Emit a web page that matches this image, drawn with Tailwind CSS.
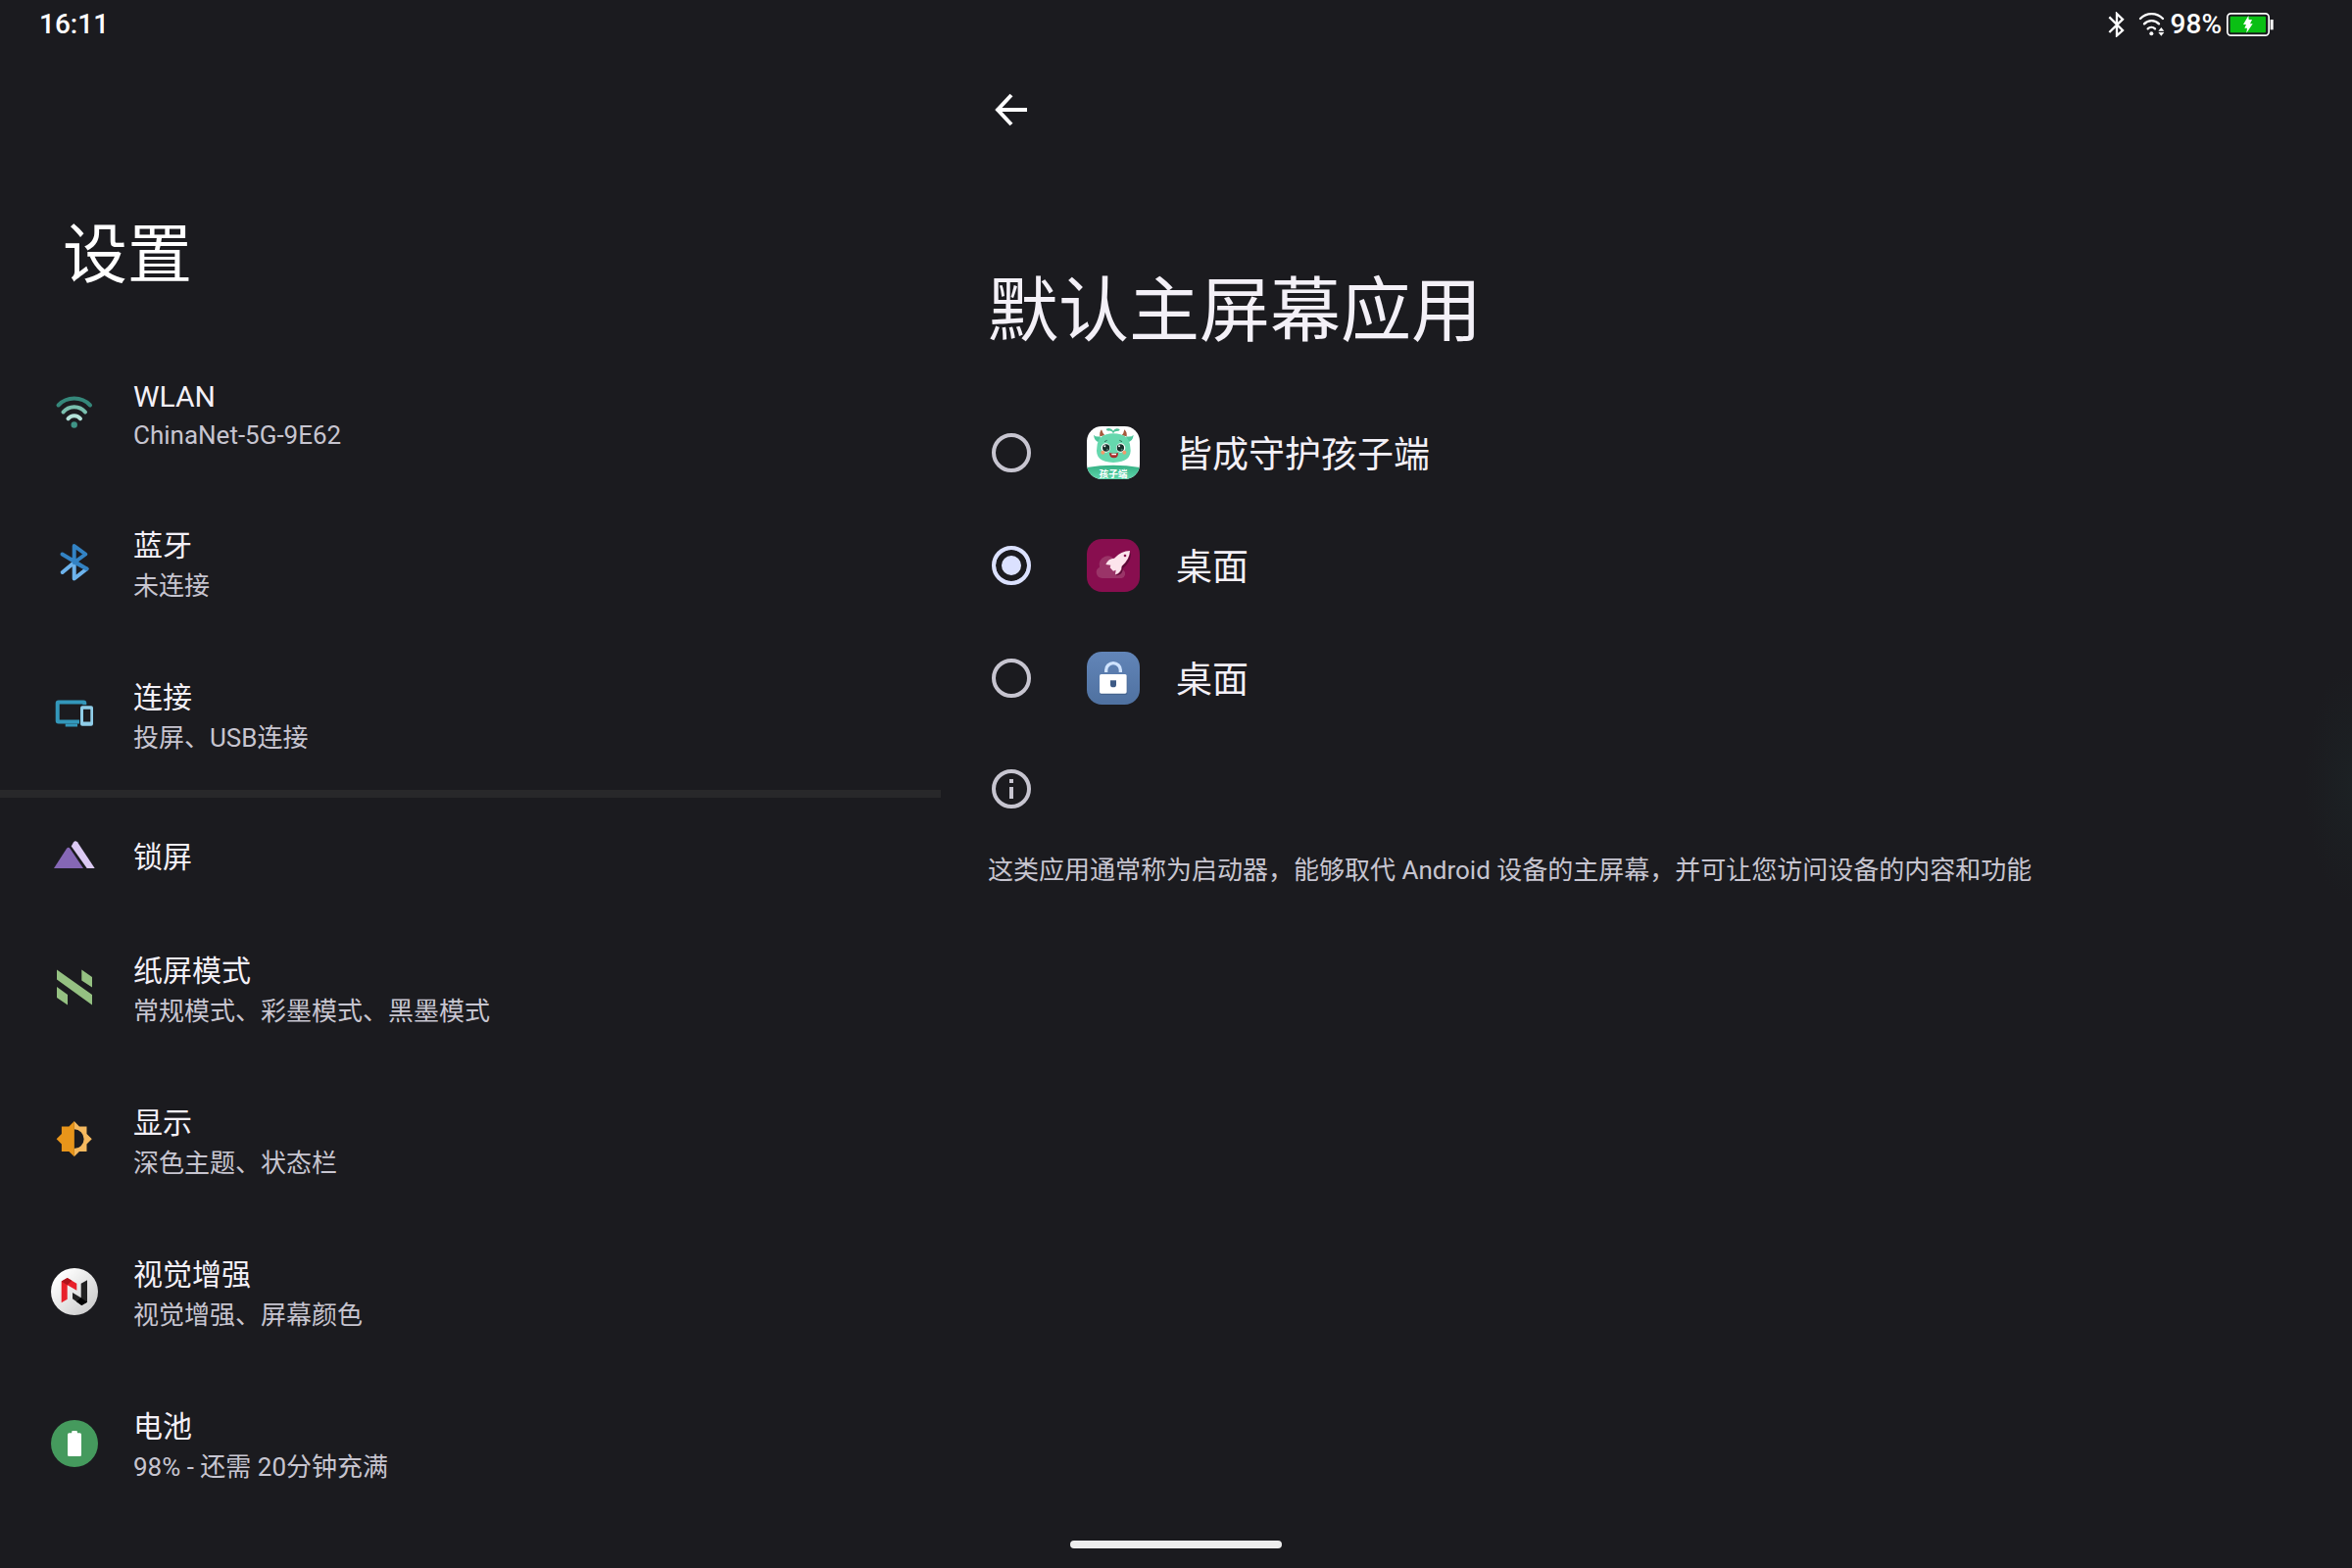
<!DOCTYPE html>
<html lang="zh-CN">
<head>
<meta charset="utf-8">
<meta name="viewport" content="width=device-width, initial-scale=1">
<title>设置</title>
<script src="https://cdn.jsdelivr.net/npm/@tailwindcss/browser@4"></script>
</head>
<body class="relative flex min-h-screen flex-col overflow-x-hidden bg-[#1b1b1f] font-[Roboto,'Noto_Sans_CJK_SC',sans-serif] text-[#f3f0f7]">

<!-- Status bar -->
<header class="flex h-[50px] items-center justify-between pl-10 pr-[79px] text-[28px] font-medium leading-8 text-white">
  <time>16:11</time>
  <div class="flex items-center">
    <svg class="mr-3 h-[26px] w-[18px]" viewBox="94 32 54 78" fill="none" stroke="#fff" stroke-width="7" aria-label="蓝牙"><path d="M98 48L139 89L121 105V38L139 55L98 95"/></svg>
    <svg class="mr-1 h-[26px] w-[30px]" viewBox="185 32 90 78" fill="none" stroke="#fff" stroke-width="7" stroke-linecap="round" aria-label="WLAN"><path d="M194 53A48 48 0 0 1 263 53M206 69A31 31 0 0 1 251 69M217 84A16 16 0 0 1 239 84"/><circle cx="228" cy="99" r="6" fill="#fff" stroke="none"/><path d="M258 80l9 11h-18zM258 106l9-11h-18z" fill="#fff" stroke="none"/></svg>
    <span>98%</span>
    <svg class="ml-1 h-[26px] w-[50px]" viewBox="453 33 150 78" aria-label="正在充电"><rect x="458.500" y="38.500" width="127" height="67" rx="11" fill="none" stroke="#fff" stroke-width="5"/><rect x="467" y="47" width="109" height="50" rx="3" fill="#0abf14"/><path d="M590 57h9v31h-9z" fill="#fff"/><path d="M523 45l-16 27h9l-5 11h8l-2 15l19-28h-8l6-13h-10z" fill="#fff"/></svg>
  </div>
</header>

<main class="flex flex-1">
  <!-- Settings list -->
  <nav class="w-2/5 pt-[168px]">
    <h1 class="pl-16 text-[66px] leading-[86px] text-white">设置</h1>
    <ul class="pt-[37px]">
      <li><a href="#wlan" class="flex items-center gap-9 pl-[52px]">
        <svg class="size-12 shrink-0" viewBox="0 0 48 48" fill="none" stroke-width="4" stroke-linecap="round"><path stroke="#35877a" d="M7.500 18.500A22.500 22.500 0 0 1 40 18.500"/><path stroke="#79bfae" d="M12.500 25.500A14.500 14.500 0 0 1 35 25.500"/><path stroke="#b5e3da" d="M17.500 32.200A7.900 7.900 0 0 1 30 32.200"/><circle cx="23.700" cy="38.500" r="3.200" fill="#3f9486"/></svg>
        <span class="flex flex-col pt-11 pb-8"><span class="text-[30px] leading-10">WLAN</span><span class="text-[26px] leading-[39px] text-[#c7c5d0]">ChinaNet-5G-9E62</span></span></a></li>
      <li><a href="#bluetooth" class="flex items-center gap-9 pl-[52px]">
        <svg class="size-12 shrink-0" viewBox="0 0 48 48" fill="none" stroke-width="4" stroke-linecap="round" stroke-linejoin="round"><path stroke="#6db3ec" d="M11.700 34L23.700 24V40.500L36.500 30.500"/><path stroke="#3383c4" d="M11.500 15.500L36.500 30.500L23.700 23.500V7L35.300 15.500L23.700 24"/></svg>
        <span class="flex flex-col pt-[39px] pb-[33px]"><span class="text-[30px] leading-[44px]">蓝牙</span><span class="text-[26px] leading-[39px] text-[#c7c5d0]">未连接</span></span></a></li>
      <li><a href="#connect" class="flex items-center gap-9 pl-[52px]">
        <svg class="size-12 shrink-0" viewBox="0 0 48 48"><rect x="6.700" y="11.500" width="27.600" height="20" rx="1" fill="none" stroke="#3397ba" stroke-width="4"/><path d="M14.700 33.500H27v3H14.700z" fill="#3397ba"/><rect x="29" y="14.200" width="15" height="22.500" fill="#1b1b1f"/><path fill="#8fcde8" fill-rule="evenodd" d="M32 15.200h9a2 2 0 0 1 2 2v16.500a2 2 0 0 1-2 2h-9a2 2 0 0 1-2-2V17.200a2 2 0 0 1 2-2zM33 18.800V31.500h7.300V18.800z"/></svg>
        <span class="flex flex-col pt-[39px] pb-[33px]"><span class="text-[30px] leading-[44px]">连接</span><span class="text-[26px] leading-[39px] text-[#c7c5d0]">投屏、USB连接</span></span></a></li>
      <li class="border-t-8 border-[#28282a]"><a href="#lock" class="flex items-center gap-9 pl-[52px]">
        <svg class="size-12 shrink-0" viewBox="0 0 48 48"><path fill="#8567b5" d="M3 38L15.900 18Q17.700 15.600 19.600 18L33 38z"/><path fill="#dccaf4" d="M20.700 15.500L23 11.500Q24.800 9 27 11.300L44.700 38H36.700z"/></svg>
        <span class="flex flex-col pt-[39px] pb-[33px]"><span class="text-[30px] leading-[44px]">锁屏</span></span></a></li>
      <li><a href="#paper" class="flex items-center gap-9 pl-[52px]">
        <svg class="size-12 shrink-0" viewBox="0 0 48 48" fill="#95c182"><path d="M6 5.500L42 31V41.500L6 15.500zM31.300 5.500L42 13V23.500L31.300 16.500zM6 23L17 31V41.500L6 34z"/></svg>
        <span class="flex flex-col pt-[39px] pb-[33px]"><span class="text-[30px] leading-[44px]">纸屏模式</span><span class="text-[26px] leading-[39px] text-[#c7c5d0]">常规模式、彩墨模式、黑墨模式</span></span></a></li>
      <li><a href="#display" class="flex items-center gap-9 pl-[52px]">
        <svg class="size-12 shrink-0" viewBox="-14.800 -14.500 30 30"><path fill="#f5b95f" fill-rule="evenodd" d="M0-11.300L3.300-8H8V-3.300L11.300 0L8 3.300V8H3.300L0 11.300zM0-6.200V6.200A6.200 6.200 0 0 0 0-6.200z"/><path fill="#e8951a" d="M.1-11.300L-3.300-8H-8V-3.300L-11.300 0L-8 3.300V8H-3.300L.1 11.300z"/></svg>
        <span class="flex flex-col pt-[39px] pb-[33px]"><span class="text-[30px] leading-[44px]">显示</span><span class="text-[26px] leading-[39px] text-[#c7c5d0]">深色主题、状态栏</span></span></a></li>
      <li><a href="#vision" class="flex items-center gap-9 pl-[52px]">
        <svg class="size-12 shrink-0" viewBox="0 0 48 48"><defs><linearGradient id="disc" x1="0" y1="0" x2="1" y2="1"><stop offset=".15" stop-color="#fff"/><stop offset=".85" stop-color="#cfcfcf"/></linearGradient></defs><circle cx="24" cy="24" r="24" fill="url(#disc)"/><path fill="#e8202a" d="M10.700 13.500L16.700 10L26.300 15.700V22.700L16.700 17.300V31.700L10.700 35.300z"/><path fill="#b0131b" d="M10.700 13.500L16.700 10L21.300 12.800L16.700 17.300z"/><path fill="#222" d="M37 12.300L30.700 15.700V30.300L22 25V31.300L31.300 38L37 34.700z"/><path fill="#000" d="M30.700 30.300L37 34.700L31.300 38L26 34.200z"/></svg>
        <span class="flex flex-col pt-[39px] pb-[33px]"><span class="text-[30px] leading-[44px]">视觉增强</span><span class="text-[26px] leading-[39px] text-[#c7c5d0]">视觉增强、屏幕颜色</span></span></a></li>
      <li><a href="#battery" class="flex items-center gap-9 pl-[52px]">
        <svg class="size-12 shrink-0" viewBox="0 0 48 48"><circle cx="24" cy="24" r="24" fill="#459a5d"/><rect x="17" y="13.300" width="14" height="23.700" rx="1.500" fill="#fff"/><rect x="21.200" y="11" width="5.700" height="4" rx="1" fill="#fff"/></svg>
        <span class="flex flex-col pt-[39px] pb-[33px]"><span class="text-[30px] leading-[44px]">电池</span><span class="text-[26px] leading-[39px] text-[#c7c5d0]">98% - 还需 20分钟充满</span></span></a></li>
    </ul>
  </nav>

  <!-- Default home app -->
  <section class="flex-1 px-12">
    <button type="button" aria-label="返回" class="flex h-[124px] w-12 items-center justify-center">
      <svg class="size-9" viewBox="0 0 36 36" fill="none" stroke="#fff" stroke-width="4"><path d="M34 18H5M18 3L4 18L18 33"/></svg>
    </button>
    <h2 class="pt-[94px] text-[72px] leading-[100px]">默认主屏幕应用</h2>
    <form class="pt-9 text-[37px] leading-[53px]">
      <label class="flex h-[115px] items-center">
        <input type="radio" name="home" class="ml-1 size-10 appearance-none rounded-full border-4 border-[#c7c5d0] checked:border-[#dbe1ff] checked:bg-[#dbe1ff] checked:shadow-[inset_0_0_0_6px_#1b1b1f]">
        <svg class="mr-[37px] ml-[57px] size-[54px]" viewBox="357 48 162 162">
          <defs><clipPath id="tile"><rect x="357" y="48" width="162" height="162" rx="46"/></clipPath><linearGradient id="band" x1="0" y1="0" x2="0" y2="1"><stop offset="0" stop-color="#35b184"/><stop offset="1" stop-color="#5fd6ac"/></linearGradient></defs>
          <g clip-path="url(#tile)">
            <rect x="357" y="48" width="162" height="162" fill="#fff"/>
            <path d="M357 174Q438 160 519 174V210H357z" fill="url(#band)"/>
            <path d="M438 70Q434 60 424 62Q416 62 416 56Q430 50 438 62Q444 50 458 57Q458 63 450 63Q441 62 438 70z" fill="#4cc397"/>
            <path d="M378 74Q384 82 398 79L400 96Q380 98 378 74zM500 74Q494 82 478 79L476 96Q498 98 500 74z" fill="#4fc79c"/>
            <path d="M397 79Q395 66 402 58Q406 70 412 76zM479 79Q481 66 472 58Q470 70 464 76z" fill="#a5593c"/>
            <path d="M388 112Q390 70 438 70Q488 70 490 112Q498 158 438 159Q380 158 388 112z" fill="#66d8ae"/>
            <circle cx="415" cy="114" r="14" fill="#fff"/><circle cx="461" cy="114" r="14" fill="#fff"/>
            <circle cx="416" cy="114" r="11" fill="#17302b"/><circle cx="460" cy="114" r="11" fill="#17302b"/>
            <circle cx="412" cy="109" r="3" fill="#fff"/><circle cx="456" cy="109" r="3" fill="#fff"/>
            <circle cx="420" cy="119" r="3" fill="#4e7d72"/><circle cx="464" cy="119" r="3" fill="#4e7d72"/>
            <path d="M411 95l8-4M457 91l8 4" stroke="#2c6b58" stroke-width="3"/>
            <circle cx="406" cy="128" r="6" fill="#f59a6a"/><circle cx="472" cy="128" r="6" fill="#f59a6a"/>
            <path d="M426 129Q440 133 453 129Q454 145 440 145Q426 145 426 129z" fill="#a92c2c"/><path d="M433 132h14v4h-14z" fill="#fff"/>
            <text x="438" y="205" text-anchor="middle" fill="#fff" class="text-[29px] font-bold">孩子端</text>
          </g>
        </svg>
        <span class="pt-1.5">皆成守护孩子端</span>
      </label>
      <label class="flex h-[115px] items-center">
        <input type="radio" name="home" checked class="ml-1 size-10 appearance-none rounded-full border-4 border-[#c7c5d0] checked:border-[#dbe1ff] checked:bg-[#dbe1ff] checked:shadow-[inset_0_0_0_6px_#1b1b1f]">
        <svg class="mr-[37px] ml-[57px] size-[54px]" viewBox="357 393 162 162"><rect x="357" y="393" width="162" height="162" rx="46" fill="#880e4f"/><path d="M404 513a18 18 0 0 1-8-34a26 26 0 0 1 50-16l24 26a14 14 0 0 1-6 24z" fill="#9a3468"/><path d="M447 501Q459 500 464 486L463 477Q489 456 490 434l2 6Q490 464 468 482Q468 500 449 505z" fill="#5c0a36"/><path d="M489 429Q462 429 441 452Q423 452 415 471L430 473L428 481L438 491L446 488L444 502Q463 496 464 476Q488 456 489 429z" fill="#fce4ec"/><circle cx="474" cy="444" r="4" fill="#880e4f"/></svg>
        <span class="pt-1.5">桌面</span>
      </label>
      <label class="flex h-[115px] items-center">
        <input type="radio" name="home" class="ml-1 size-10 appearance-none rounded-full border-4 border-[#c7c5d0] checked:border-[#dbe1ff] checked:bg-[#dbe1ff] checked:shadow-[inset_0_0_0_6px_#1b1b1f]">
        <svg class="mr-[37px] ml-[57px] size-[54px]" viewBox="357 78 162 162"><defs><linearGradient id="blue" x1="0" y1="0" x2="0" y2="1"><stop offset="0" stop-color="#6285b8"/><stop offset="1" stop-color="#4f71a0"/></linearGradient></defs><rect x="357" y="78" width="162" height="162" rx="46" fill="url(#blue)"/><path d="M416 141V134A22 21 0 0 1 460 134V141" fill="none" stroke="#cfe3ff" stroke-width="10"/><rect x="397" y="151" width="84" height="59" rx="5" fill="#45648f"/><rect x="396" y="147" width="83" height="59" rx="5" fill="#fff"/><path d="M429 166h18v13a9 8 0 0 1-18 0z" fill="#3d5a86"/></svg>
        <span class="pt-1.5">桌面</span>
      </label>
    </form>
    <svg class="mt-9 ml-1 size-10" viewBox="0 0 40 40" aria-label="信息"><circle cx="20" cy="20" r="18" fill="none" stroke="#c7c5d0" stroke-width="4"/><path d="M18 10h4v4h-4zM18 18h4v12h-4z" fill="#c7c5d0"/></svg>
    <p class="pt-11 text-[26px] leading-[39px] text-[#c7c5d0]">这类应用通常称为启动器，能够取代 Android 设备的主屏幕，并可让您访问设备的内容和功能</p>
  </section>
</main>

<!-- Edge glow and gesture bar, over the content -->
<div class="pointer-events-none absolute top-[680px] right-0 h-60 w-12 bg-[radial-gradient(48px_120px_at_right,#1c2124,#1b1b1f)]"></div>
<div class="fixed bottom-5 left-1/2 h-2 w-[216px] -translate-x-1/2 rounded-full bg-[#ededed]"></div>
</body>
</html>
